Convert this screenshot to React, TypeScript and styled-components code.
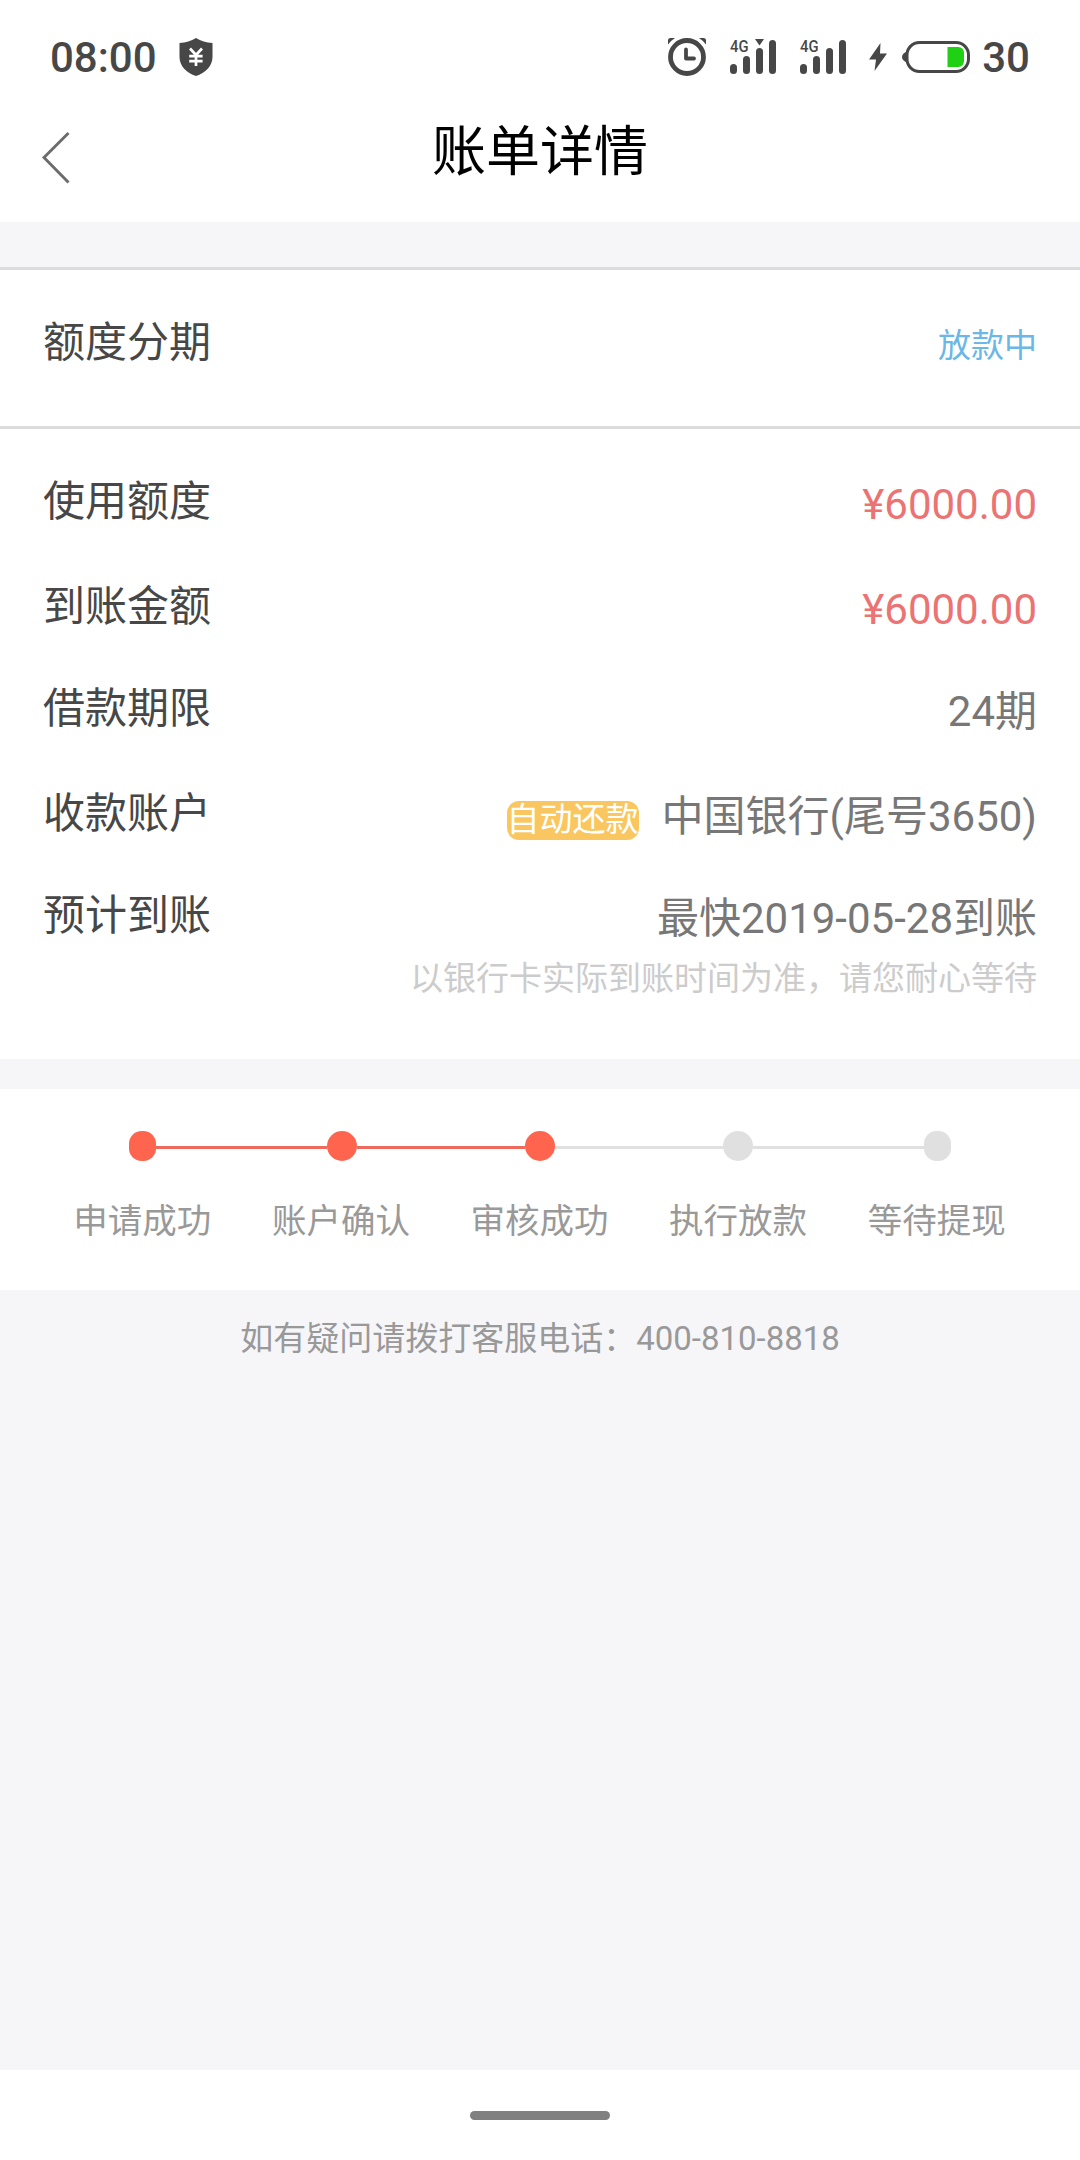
import React from "react";
import styled, { createGlobalStyle } from "styled-components";

const GlobalStyle = createGlobalStyle`
  *, *::before, *::after { box-sizing: border-box; }
  body {
    margin: 0;
    background: #f6f6f9;
    font-family: Roboto, "Noto Sans CJK SC", sans-serif;
  }
`;

const INK = "#474747";

const Screen = styled.div`
  display: flex;
  flex-direction: column;
  width: 1080px;
  height: 2160px;
  overflow: hidden;
  background: #f6f6f9;
`;

const StatusBar = styled.div`
  display: flex;
  align-items: center;
  justify-content: space-between;
  height: 114px;
  padding: 0 50px;
  background: #fff;
  color: ${INK};
`;

const StatusGroup = styled.div`
  display: flex;
  align-items: center;
`;

const StatusText = styled.span<{ $gap?: number }>`
  margin-left: ${(p) => p.$gap ?? 0}px;
  padding-top: 2px;
  font-size: 42px;
  font-weight: 500;
  line-height: 60px;
`;

const Glyph = styled.svg<{ $gap?: number }>`
  display: block;
  flex: none;
  margin-left: ${(p) => p.$gap ?? 0}px;
  overflow: visible;
`;

const NavBar = styled.header`
  display: grid;
  grid-template-columns: 120px 1fr 120px;
  height: 108px;
  background: #fff;
`;

const BackButton = styled.button`
  display: flex;
  align-items: flex-start;
  padding: 18px 0 0 41px;
  border: 0;
  background: none;
`;

const Title = styled.h1`
  margin: 0;
  padding-top: 2px;
  color: #000;
  font-size: 54px;
  font-weight: 400;
  line-height: 74px;
  text-align: center;
`;

const Summary = styled.section`
  display: flex;
  justify-content: space-between;
  height: 162px;
  margin-top: 45px;
  padding: 43px 43px 0;
  border-top: 3px solid #dcdcde;
  border-bottom: 3px solid #dcdcde;
  background: #fff;
`;

const Label = styled.span`
  color: ${INK};
  font-size: 42px;
  line-height: 60px;
`;

const StatusTag = styled.span`
  padding-top: 3px;
  color: #6bb7e6;
  font-size: 33px;
  line-height: 60px;
`;

const Details = styled.section`
  display: flex;
  flex-direction: column;
  height: 630px;
  padding: 43px 43px 0;
  background: #fff;
`;

const DetailRow = styled.div<{ $height: number }>`
  display: flex;
  flex: none;
  justify-content: space-between;
  height: ${(p) => p.$height}px;
`;

const Value = styled.span<{ $accent?: boolean }>`
  display: flex;
  align-items: flex-start;
  padding-top: 3px;
  color: ${(p) => (p.$accent ? "#eb7373" : "#777")};
  font-size: 42px;
  line-height: 60px;
`;

const Badge = styled.span`
  height: 39px;
  margin: 14px 23px 0 0;
  border-radius: 12px;
  background: #f9c65f;
  color: #fff;
  font-size: 33px;
  line-height: 37px;
`;

const Note = styled.p`
  margin: 1px 0 0;
  color: #ccc;
  font-size: 33px;
  line-height: 48px;
  text-align: right;
`;

const Progress = styled.section`
  height: 201px;
  margin-top: 30px;
  padding: 42px 43px 0;
  background: #fff;
`;

const Track = styled.div`
  display: flex;
  align-items: center;
  justify-content: center;
  height: 30px;
`;

const Dot = styled.span<{ $done: boolean; $end: boolean }>`
  flex: none;
  width: ${(p) => (p.$end ? 27 : 30)}px;
  height: 30px;
  border-radius: ${(p) => (p.$end ? 12.5 : 15)}px;
  background: ${(p) => (p.$done ? "#ff654e" : "#e0e0e0")};
`;

const Connector = styled.span<{ $done: boolean; $outer: boolean }>`
  flex: none;
  width: ${(p) => (p.$outer ? 171 : 168)}px;
  height: 3px;
  margin-top: 3px;
  background: ${(p) => (p.$done ? "#ed6a5c" : "#e0e0e0")};
`;

const StepLabels = styled.div`
  display: grid;
  grid-template-columns: repeat(5, 198.6px);
  margin-top: 36px;
`;

const StepLabel = styled.span`
  color: #999;
  font-size: 34.5px;
  line-height: 48px;
  text-align: center;
  white-space: nowrap;
`;

const Support = styled.footer`
  padding-top: 25px;
  color: #999;
  font-size: 33px;
  line-height: 48px;
  text-align: center;
`;

const HomeArea = styled.div`
  display: flex;
  justify-content: center;
  height: 90px;
  margin-top: auto;
  padding-top: 41px;
  background: #fff;
`;

const HomeHandle = styled.span`
  width: 140px;
  height: 9px;
  border-radius: 5px;
  background: #808080;
`;

const SignalText = styled.text`
  font: 500 17px Roboto, sans-serif;
  fill: ${INK};
`;

const ShieldIcon = () => (
  <Glyph $gap={22} width="34" height="40" viewBox="0 0 34 40">
    <path d="M17 1C12 4 7 5.500 .5 6v14c0 9 7 16 16.500 19C26.500 36 33.500 29 33.500 20V6C27 5.500 22 4 17 1z" fill={INK} />
    <path d="M11 11.500l6 6.500 6-6.500M10.200 19.200h13.400M10.200 24.200h13.400M17 17.500V29" fill="none" stroke="#fff" strokeWidth="2.700" />
  </Glyph>
);

const AlarmIcon = () => (
  <Glyph width="38" height="40" viewBox="0 0 38 40">
    <circle cx="19" cy="20" r="16.500" fill="none" stroke={INK} strokeWidth="4.800" />
    <path d="M18 12.500v9h8" fill="none" stroke={INK} strokeWidth="3.800" strokeLinecap="round" strokeLinejoin="round" />
    <path d="M0 7.500V3.500Q0 1 2.500 1H7Q3 3.500 0 7.500zM38 7.500V3.500Q38 1 35.500 1H31Q35 3.500 38 7.500z" fill={INK} />
  </Glyph>
);

const SignalIcon = ({ gap, active }: { gap: number; active?: boolean }) => (
  <Glyph $gap={gap} width="46" height="36" viewBox="0 0 46 36">
    <SignalText x="0" y="13" textLength="18.5" lengthAdjust="spacingAndGlyphs">4G</SignalText>
    {[10, 18, 26, 34].map((h, i) => (
      <rect key={h} x={i * 13} y={35 - h} width="7" height={h} rx="3.500" fill={INK} />
    ))}
    {active && <path d="M25 0h9l-4.500 6.500z" fill={INK} />}
  </Glyph>
);

const BoltIcon = () => (
  <Glyph $gap={23} width="18" height="30" viewBox="0 0 18 30">
    <path d="M11.500 1L0 17.500h7L5.500 29 18 11.500h-7z" fill={INK} />
  </Glyph>
);

const BatteryIcon = () => (
  <Glyph $gap={15} width="68" height="32" viewBox="0 0 68 32">
    <path d="M5 10.500C2 11.500 0 13.500 0 16s2 4.500 5 5.500z" fill={INK} />
    <rect x="5" y="1.500" width="61.500" height="29" rx="12.500" fill="none" stroke={INK} strokeWidth="3" />
    <path d="M45.500 6h10.500q6 0 6 6.500v7q0 6.500-6 6.500h-10.500z" fill="#20d014" />
  </Glyph>
);

const BackIcon = () => (
  <Glyph width="29" height="52" viewBox="0 0 29 52">
    <path d="M27.500 1L3 25.500 27.500 50.500" fill="none" stroke="#6c6c6c" strokeWidth="2.900" />
  </Glyph>
);

const steps = [
  { label: "申请成功", done: true },
  { label: "账户确认", done: true },
  { label: "审核成功", done: true },
  { label: "执行放款", done: false },
  { label: "等待提现", done: false },
];

const last = steps.length - 1;

export default function App() {
  return (
    <Screen>
      <GlobalStyle />
      <StatusBar>
        <StatusGroup>
          <StatusText>08:00</StatusText>
          <ShieldIcon />
        </StatusGroup>
        <StatusGroup>
          <AlarmIcon />
          <SignalIcon gap={24} active />
          <SignalIcon gap={24} />
          <BoltIcon />
          <BatteryIcon />
          <StatusText $gap={12.5}>30</StatusText>
        </StatusGroup>
      </StatusBar>
      <NavBar>
        <BackButton aria-label="返回">
          <BackIcon />
        </BackButton>
        <Title>账单详情</Title>
      </NavBar>
      <Summary>
        <Label>额度分期</Label>
        <StatusTag>放款中</StatusTag>
      </Summary>
      <Details>
        <DetailRow $height={105}>
          <Label>使用额度</Label>
          <Value $accent>¥6000.00</Value>
        </DetailRow>
        <DetailRow $height={102}>
          <Label>到账金额</Label>
          <Value $accent>¥6000.00</Value>
        </DetailRow>
        <DetailRow $height={105}>
          <Label>借款期限</Label>
          <Value>24期</Value>
        </DetailRow>
        <DetailRow $height={102}>
          <Label>收款账户</Label>
          <Value>
            <Badge>自动还款</Badge>
            中国银行(尾号3650)
          </Value>
        </DetailRow>
        <DetailRow $height={68}>
          <Label>预计到账</Label>
          <Value>最快2019-05-28到账</Value>
        </DetailRow>
        <Note>以银行卡实际到账时间为准，请您耐心等待</Note>
      </Details>
      <Progress>
        <Track>
          {steps.map((step, i) => (
            <React.Fragment key={step.label}>
              {i > 0 && <Connector $done={step.done} $outer={i === 1 || i === last} />}
              <Dot $done={step.done} $end={i === 0 || i === last} />
            </React.Fragment>
          ))}
        </Track>
        <StepLabels>
          {steps.map((step) => (
            <StepLabel key={step.label}>{step.label}</StepLabel>
          ))}
        </StepLabels>
      </Progress>
      <Support>如有疑问请拨打客服电话：400-810-8818</Support>
      <HomeArea>
        <HomeHandle />
      </HomeArea>
    </Screen>
  );
}
